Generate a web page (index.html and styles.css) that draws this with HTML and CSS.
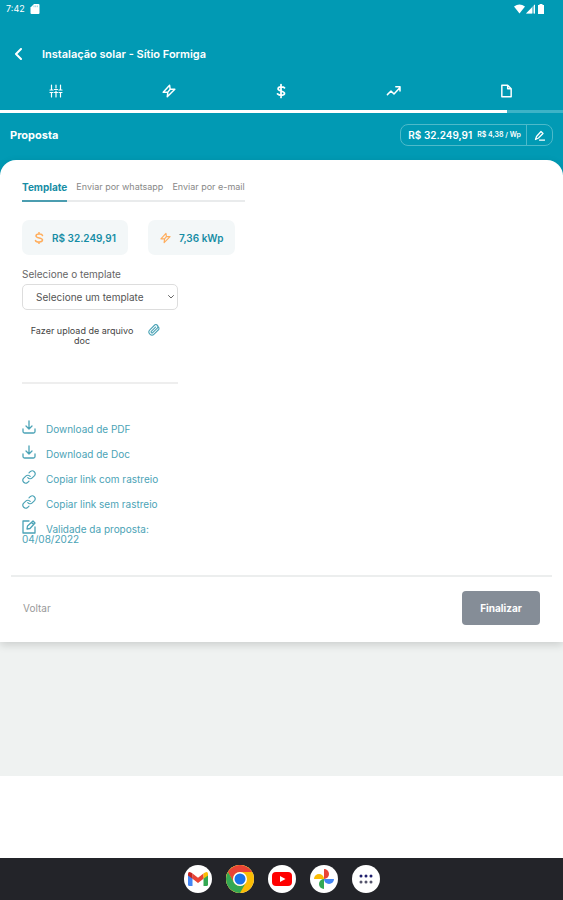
FILE: index.html
```html
<!DOCTYPE html>
<html lang="pt-BR">
<head>
    <meta charset="UTF-8">
    <meta name="viewport" content="width=device-width, initial-scale=1.0">
    <title>Proposta</title>
    <link rel="stylesheet" href="styles.css">
</head>
<body>
    <div class="status-bar">
        <span>7:42</span>
        <svg class="sd-icon" viewBox="0 0 10 10"><path fill="currentColor" d="M4 0h4.500q1 0 1 1v8q0 1-1 1h-7q-1 0-1-1V3.500z"/><path stroke="#019ab4" stroke-width=".4" d="M4 1.500v1.700M5.700 1.500v1.700M7.400 1.500v1.700"/></svg>
        <div class="status-right">
            <svg width="11" height="10" viewBox="0 0 11 10"><path fill="currentColor" d="M0 2.500Q5.500-1.500 11 2.500L5.500 9.500z"/></svg>
            <svg width="10" height="10" viewBox="0 0 10 10"><path fill="currentColor" opacity=".5" d="M9 0v9.500H0z"/><path fill="currentColor" d="M6 3.500v6H0zM8 1h1v8.500H8z"/></svg>
            <svg width="8" height="10" viewBox="0 0 8 10"><path fill="currentColor" d="M2.500 0h3v1H7v9H1V1h1.500z"/></svg>
        </div>
    </div>

    <main class="app">
        <header class="header">
            <div class="title-row">
                <button class="back-btn" type="button" aria-label="Voltar">
                    <svg width="8" height="12" viewBox="0 0 8 12"><path class="line" stroke-width="2" d="M7 1L2 6l5 5"/></svg>
                </button>
                <h1>Instalação solar - Sítio Formiga</h1>
            </div>
            <nav class="steps">
                <button type="button" aria-label="Dados">
                    <svg width="14" height="14" viewBox="0 0 14 14"><path class="line" stroke-width="1.200" d="M2.500 1v5M2.500 9v4M7 1v3M7 7v6M11.500 1v5M11.500 9v4M1 8.500h3M5.500 5.500h3M10 8.500h3M1 6h3M10 6h3M5.500 8.500h3"/></svg>
                </button>
                <button type="button" aria-label="Energia">
                    <svg width="14" height="14" viewBox="0 0 24 24"><path class="line" stroke-width="2.500" d="M13 2L2 14h8l-1 8 13-13h-8zM14 9l-4 5"/></svg>
                </button>
                <button type="button" aria-label="Valores">
                    <svg width="14" height="16" viewBox="0 0 24 24"><path class="line" stroke-width="3" d="M12 1v22M18 6.500C16 4.500 7 4 7 8.500c0 4 11 3 11 7.500 0 4.500-9 4-12 1"/></svg>
                </button>
                <button type="button" aria-label="Retorno">
                    <svg width="16" height="12" viewBox="0 0 24 20"><path class="line" stroke-width="2.500" d="M1 16l6-6 5 5 10-11M15 3h7v7"/></svg>
                </button>
                <button type="button" aria-label="Proposta">
                    <svg width="13" height="14" viewBox="0 0 22 24"><path class="line" stroke-width="2.500" d="M3 2h10l6 6v14H3zM13 2v6h6"/></svg>
                </button>
            </nav>
            <div class="progress"><div class="progress-bar" style="width: 90%"></div></div>
            <div class="summary">
                <h2>Proposta</h2>
                <div class="price">
                    <strong>R$ 32.249,91</strong>
                    <small>R$ 4,38 / Wp</small>
                    <button type="button" aria-label="Editar">
                        <svg width="11" height="11" viewBox="0 0 22 22"><path class="line" stroke-width="2.500" d="M3 19l2-6L14 3l4 4-9 9-6 3zM11 20h10"/></svg>
                    </button>
                </div>
            </div>
        </header>

        <section class="card">
            <div class="content">
                <nav class="tabs">
                    <button class="active" type="button">Template</button>
                    <button type="button">Enviar por whatsapp</button>
                    <button type="button">Enviar por e-mail</button>
                </nav>

                <div class="badges">
                    <div class="badge">
                        <svg width="10" height="12" viewBox="0 0 10 12"><path class="line" stroke-width="1.500" d="M8.500 3.500C8 1.500 2 1.500 2 4s6.500 1.500 6.500 4S2 10.500 1.500 8.500M5 .5V2M5 10v1.500"/></svg>
                        <span>R$ 32.249,91</span>
                    </div>
                    <div class="badge">
                        <svg width="11" height="12" viewBox="0 0 24 24"><path class="line" stroke-width="2.500" d="M13 2L2 14h8l-1 8 13-13h-8zM14 9l-4 5"/></svg>
                        <span>7,36 kWp</span>
                    </div>
                </div>

                <div class="form">
                    <label for="template">Selecione o template</label>
                    <div class="select-box">
                        <select id="template" name="template">
                            <option value="">Selecione um template</option>
                        </select>
                        <svg width="6" height="4" viewBox="0 0 6 4"><path class="line" d="M.5.5L3 3 5.500.5"/></svg>
                    </div>
                    <button class="upload" type="button">
                        <span>Fazer upload de arquivo doc</span>
                        <svg width="12" height="12" viewBox="0 0 24 24"><path class="line" stroke-width="2.200" d="M21.400 11l-9.200 9.200a6 6 0 0 1-8.500-8.500l9.200-9.200a4 4 0 0 1 5.700 5.700l-9.200 9.200a2 2 0 0 1-2.800-2.800l8.500-8.500M21.400 11a5 5 0 0 0-3-7"/></svg>
                    </button>
                </div>

                <ul class="links">
                    <li><a href="#"><svg viewBox="0 0 14 14"><path class="line" stroke-width="1.300" d="M1 9v2.500Q1 13 2.500 13h9q1.500 0 1.500-1.500V9M7 1v8M4 6l3 3 3-3"/></svg>Download de PDF</a></li>
                    <li><a href="#"><svg viewBox="0 0 14 14"><path class="line" stroke-width="1.300" d="M1 9v2.500Q1 13 2.500 13h9q1.500 0 1.500-1.500V9M7 1v8M4 6l3 3 3-3"/></svg>Download de Doc</a></li>
                    <li><a href="#"><svg viewBox="0 0 24 24"><path class="line" stroke-width="2" d="M10 13a5 5 0 0 0 7.500.500l4-4a5 5 0 0 0-7-7L12 5M14 11a5 5 0 0 0-7.500-.500l-4 4a5 5 0 0 0 7 7L12 19"/></svg>Copiar link com rastreio</a></li>
                    <li><a href="#"><svg viewBox="0 0 24 24"><path class="line" stroke-width="2" d="M10 13a5 5 0 0 0 7.500.500l4-4a5 5 0 0 0-7-7L12 5M14 11a5 5 0 0 0-7.500-.500l-4 4a5 5 0 0 0 7 7L12 19"/></svg>Copiar link sem rastreio</a></li>
                    <li><a href="#"><svg viewBox="0 0 14 14"><path class="line" stroke-width="1.300" d="M7 1H1v12h12V7M5 9l.5-3L11 1l2 2-5 5.500zM9.500 2.500l2 2"/></svg>Validade da proposta: 04/08/2022</a></li>
                </ul>
            </div>

            <footer class="footer">
                <button class="btn-back" type="button">Voltar</button>
                <button class="btn-finish" type="button">Finalizar</button>
            </footer>
        </section>
    </main>

    <nav class="taskbar">
        <button type="button" aria-label="Gmail">
            <svg width="20" height="16" viewBox="0 0 20 16"><path fill="#4285f4" d="M0 3l4.500 3v9H1.500Q0 15 0 13.500z"/><path fill="#34a853" d="M20 3l-4.500 3v9h3q1.500 0 1.500-1.500z"/><path fill="#ea4335" d="M4.500 2.500L10 6.700l5.500-4.200v5.300L10 12 4.500 7.800z"/><path fill="#c5221f" d="M0 3q0-3 3-1.600l1.500 1.100v5.300L0 4.500z"/><path fill="#fbbc04" d="M20 3q0-3-3-1.600l-1.500 1.100v5.300L20 4.500z"/></svg>
        </button>
        <button type="button" aria-label="Chrome">
            <svg width="28" height="28" viewBox="0 0 28 28"><circle cx="14" cy="14" r="14" fill="#fbbc04"/><path fill="#ea4335" d="M1.900 7A14 14 0 0 1 26.100 7H14a7 7 0 0 0-6 10.500z"/><path fill="#34a853" d="M1.900 7A14 14 0 0 0 14 28l6-10.500A7 7 0 0 1 8 17.500z"/><circle cx="14" cy="14" r="7" fill="#fff"/><circle cx="14" cy="14" r="5.500" fill="#1a73e8"/></svg>
        </button>
        <button type="button" aria-label="YouTube">
            <svg width="20" height="14" viewBox="0 0 20 14"><rect width="20" height="14" rx="4" fill="#f00"/><path fill="#fff" d="M8 4l5.500 3L8 10z"/></svg>
        </button>
        <button type="button" aria-label="Fotos">
            <svg width="20" height="20" viewBox="0 0 20 20"><path fill="#ea4335" d="M10 0a5 5 0 0 1 0 10z"/><path fill="#4285f4" d="M20 10a5 5 0 0 1-10 0z"/><path fill="#34a853" d="M10 20a5 5 0 0 1 0-10z"/><path fill="#fbbc04" d="M0 10a5 5 0 0 1 10 0z"/></svg>
        </button>
        <button type="button" aria-label="Aplicativos">
            <svg width="14" height="10" viewBox="0 0 14 10"><g fill="#20206e"><circle cx="2" cy="2" r="1.500"/><circle cx="7" cy="2" r="1.500"/><circle cx="12" cy="2" r="1.500"/></g><g fill="#55556c"><circle cx="2" cy="8" r="1.500"/><circle cx="7" cy="8" r="1.500"/><circle cx="12" cy="8" r="1.500"/></g></svg>
        </button>
    </nav>
</body>
</html>
```

FILE: styles.css
```css
* {
    box-sizing: border-box;
}
body {
    font-family: Inter, "Liberation Sans", sans-serif;
    font-size: 10px;
    line-height: 12px;
    margin: 0;
    min-height: 100vh;
    display: flex;
    flex-direction: column;
    background-color: #fff;
    color: #666;
}
h1, h2, ul {
    margin: 0;
    padding: 0;
}
button {
    font: inherit;
    color: inherit;
    background: none;
    border: none;
    padding: 0;
    cursor: pointer;
}
svg {
    flex-shrink: 0;
}
.line {
    fill: none;
    stroke: currentColor;
    stroke-linecap: round;
    stroke-linejoin: round;
}
.status-bar {
    display: flex;
    align-items: center;
    gap: 5px;
    height: 18px;
    padding: 0 18px 0 6px;
    background-color: #019ab4;
    color: #fff;
    font-size: 9px;
}
.sd-icon {
    width: 10px;
    height: 10px;
}
.status-right {
    display: flex;
    gap: 1px;
    margin-left: auto;
}

/* header */
.app {
    flex: 1;
    margin-bottom: 82px; /* space above the taskbar */
    background-color: #eff2f1;
}
.header {
    background-color: #019ab4;
    color: #fff;
    padding: 24px 0 18px;
}
.title-row {
    display: flex;
    align-items: center;
    gap: 20px;
    height: 24px;
    padding: 0 14px;
}
.back-btn,
.steps button,
.taskbar button {
    display: flex;
    align-items: center;
    justify-content: center;
}
h1 {
    font-size: 11px;
    font-weight: 600;
}
.steps {
    display: grid;
    grid-template-columns: repeat(5, 1fr);
    height: 44px;
    padding-top: 6px;
}
.steps button {
    height: 38px;
}
.progress {
    background-color: #3db3c7;
    height: 3px;
}
.progress-bar {
    height: 3px;
    background-color: #fff;
}
.summary {
    display: flex;
    align-items: center;
    justify-content: space-between;
    padding: 11px 10px;
}
h2 {
    font-size: 11px;
    font-weight: 700;
}
.price {
    display: flex;
    align-items: center;
    height: 22px;
    border: 1px solid #4dbaca;
    border-radius: 8px;
    padding-left: 7px;
}
.price strong {
    font-weight: 600;
}
.price small {
    font-size: 7px;
    font-weight: 600;
    margin: 0 5px;
}
.price button {
    display: flex;
    align-items: center;
    justify-content: center;
    width: 26px;
    height: 20px;
    border-left: 1px solid #4dbaca;
}

/* card */
.card {
    background-color: #fff;
    border-radius: 16px 16px 0 0;
    margin-top: -15px;
    padding: 17px 11px;
    box-shadow: 0 3px 8px rgba(0, 0, 0, 0.15);
}
.content {
    padding: 0 11px 20px;
}
.tabs {
    display: flex;
    gap: 9px;
    width: fit-content;
    border-bottom: 2px solid #e9ebec;
    font-size: 9px;
    color: #888;
}
.tabs button {
    height: 25px;
    padding-bottom: 4px;
    margin-bottom: -2px;
    border-bottom: 2px solid transparent;
    white-space: nowrap;
}
.tabs .active {
    color: #168da5;
    border-color: #4b9db0;
    font-size: 10px;
    font-weight: 700;
}
.badges {
    display: flex;
    gap: 20px;
    margin: 18px 0 13px;
}
.badge {
    display: flex;
    align-items: center;
    gap: 8px;
    height: 35px;
    padding: 0 12px;
    border-radius: 7px;
    background-color: #f3f7f8;
    color: #168da5;
    font-weight: 600;
}
.badge svg {
    color: #ffad5c;
}
.form {
    width: 156px;
    border-bottom: 2px solid #eee;
    padding-bottom: 36px;
}
.form label {
    display: block;
    margin-bottom: 4px;
}
.select-box {
    display: flex;
    align-items: center;
    height: 26px;
    border: 1px solid #ddd;
    border-radius: 5px;
    padding-right: 3px;
}
.select-box select {
    appearance: none;
    flex: 1;
    min-width: 0;
    height: 24px;
    padding: 0 0 0 13px;
    border: none;
    background: none;
    font: inherit;
    color: #555;
}
.upload {
    display: flex;
    align-items: flex-start;
    gap: 10px;
    margin-top: 14px;
    padding: 0 4px;
    font-size: 9px;
    line-height: 10px;
    color: #444;
}
.upload span {
    width: 112px;
    padding-top: 2px;
}
.upload svg {
    color: #4ba3b6;
}
.links {
    width: 156px;
    margin-top: 36px;
    list-style: none;
    line-height: 10px;
}
.links li {
    margin-bottom: 11px;
}
.links a {
    display: block;
    color: #4ba3b6;
    text-decoration: none;
}
.links svg {
    width: 14px;
    height: 14px;
    margin-right: 10px;
    vertical-align: -1px;
}
.footer {
    display: flex;
    align-items: center;
    justify-content: space-between;
    border-top: 2px solid #eceeee;
    padding: 14px 12px 0;
}
.btn-back {
    color: #999;
}
.btn-finish {
    width: 78px;
    height: 34px;
    border-radius: 4px;
    background-color: #858d97;
    color: #fff;
    font-weight: 700;
}

/* taskbar */
.taskbar {
    display: flex;
    align-items: center;
    justify-content: center;
    gap: 14px;
    height: 42px;
    background-color: #232429;
}
.taskbar button {
    width: 28px;
    height: 28px;
    border-radius: 50%;
    background-color: #fff;
}
```
